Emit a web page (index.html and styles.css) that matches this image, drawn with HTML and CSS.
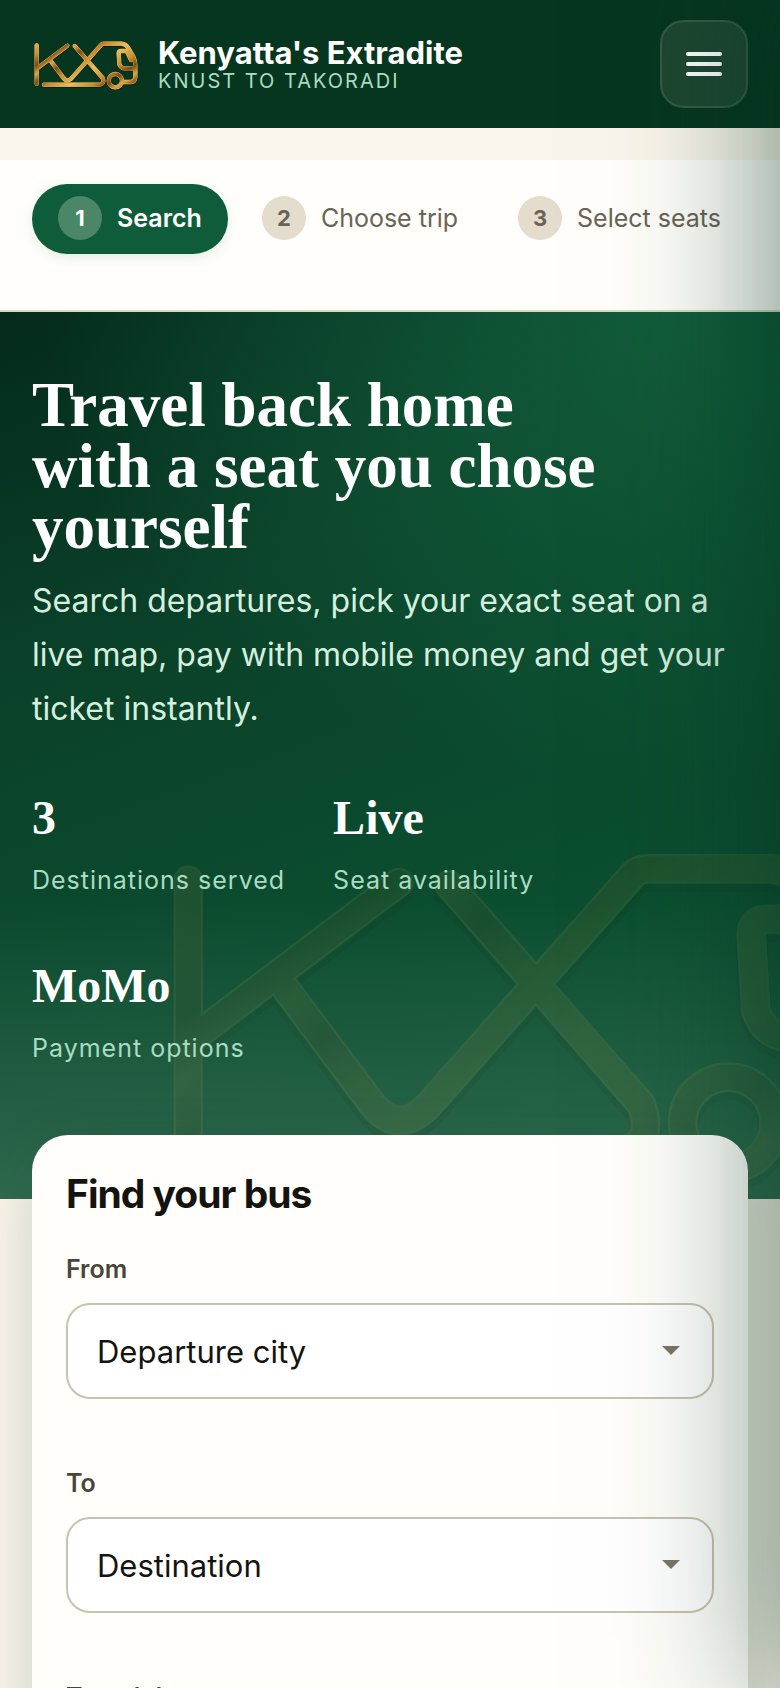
FILE: index.html
```html
<!DOCTYPE html>
<html lang="en">
<head>
<meta charset="utf-8">
<meta name="viewport" content="width=device-width, initial-scale=1">
<title>Kenyatta's Extradite</title>
<link rel="stylesheet" href="styles.css">
</head>
<body>
<svg class="defs" aria-hidden="true">
  <defs>
    <linearGradient id="gold" gradientUnits="userSpaceOnUse" x1="100" y1="120" x2="150" y2="190" spreadMethod="reflect">
      <stop offset="0" stop-color="#e9bd5c"/>
      <stop offset="0.45" stop-color="#c98d2e"/>
      <stop offset="0.75" stop-color="#7d4a12"/>
      <stop offset="1" stop-color="#dca745"/>
    </linearGradient>
    <g id="logo-lines" fill="none" stroke-linecap="round" stroke-linejoin="round">
      <path d="M110 134V249"/>
      <path d="M202 135L112 203"/>
      <path d="M153 182L189 230Q202 248 217 230L303 133Q306 129 311 129H364Q378 130 385 142L400 168Q407 184 406 205V230Q404 244 392 244H368"/>
      <path d="M224 136L308 232Q314 249 300 252H132"/>
      <path d="M384 151H363Q356 151 356 158L358 191Q362 203 375 203H402M382 155L393 178"/>
      <circle cx="346" cy="240" r="20"/>
    </g>
    <symbol id="logo" viewBox="96 112 324 156">
      <use href="#logo-lines" y="3" class="logo-shade"/>
      <use href="#logo-lines" class="logo-edge"/>
      <use href="#logo-lines" class="logo-body"/>
    </symbol>
  </defs>
</svg>

<header class="topbar">
  <a class="brand" href="#">
    <svg class="brand-logo" aria-hidden="true"><use href="#logo"/></svg>
    <span class="brand-text">
      <span class="brand-name">Kenyatta's Extradite</span>
      <span class="brand-route">KNUST TO TAKORADI</span>
    </span>
  </a>
  <button class="menu-button" type="button" aria-label="Open menu">
    <span class="bar"></span><span class="bar"></span><span class="bar"></span>
  </button>
</header>

<nav class="stepper" aria-label="Booking progress">
  <ol class="steps">
    <li class="step step-active" aria-current="step"><span class="step-number">1</span>Search</li>
    <li class="step"><span class="step-number">2</span>Choose trip</li>
    <li class="step"><span class="step-number">3</span>Select seats</li>
  </ol>
</nav>

<main>
  <section class="hero">
    <svg class="hero-mark" aria-hidden="true"><use href="#logo"/></svg>
    <div class="hero-content">
      <h1 class="hero-title">Travel back home <br>with a seat you chose yourself</h1>
      <p class="hero-lead">Search departures, pick your exact seat on a live map, pay with mobile money and get your ticket instantly.</p>
      <ul class="stats">
        <li class="stat"><strong class="stat-value">3</strong><span class="stat-label">Destinations served</span></li>
        <li class="stat"><strong class="stat-value">Live</strong><span class="stat-label">Seat availability</span></li>
        <li class="stat"><strong class="stat-value">MoMo</strong><span class="stat-label">Payment options</span></li>
      </ul>
    </div>
  </section>

  <form class="search-card">
    <h2 class="card-title">Find your bus</h2>
    <div class="field">
      <label class="field-label" for="from">From</label>
      <div class="select-wrap">
        <select class="control" id="from"><option>Departure city</option></select>
      </div>
    </div>
    <div class="field">
      <label class="field-label" for="to">To</label>
      <div class="select-wrap">
        <select class="control" id="to"><option>Destination</option></select>
      </div>
    </div>
    <div class="field">
      <label class="field-label" for="date">Travel date</label>
      <input class="control" id="date" type="text">
    </div>
  </form>
</main>

<aside class="drawer" aria-hidden="true"></aside>
</body>
</html>
```
FILE: styles.css
```css
* {
  box-sizing: border-box;
}

html {
  height: 100%;
}

body {
  margin: 0;
  height: 100%;
  overflow: hidden;
  background: #faf5ea;
  color: #15130f;
  font-family: Inter, "Liberation Sans", sans-serif;
}

.defs {
  position: absolute;
  width: 0;
  height: 0;
}

.logo-shade {
  stroke: #1d1204;
  stroke-width: 14px;
  stroke-opacity: 0.7;
}

.logo-edge {
  stroke: #f2cd7c;
  stroke-width: 13px;
}

.logo-body {
  stroke: url(#gold);
  stroke-width: 11px;
}

/* Top bar */
.topbar {
  display: flex;
  align-items: center;
  justify-content: space-between;
  height: 128px;
  padding: 0 32px;
  background: #073620;
}

.brand {
  display: flex;
  align-items: center;
  gap: 18px;
  color: #fff;
  text-decoration: none;
}

.brand-logo {
  width: 108px;
  height: 52px;
}

.brand-text {
  display: flex;
  flex-direction: column;
  padding-top: 2px;
}

.brand-name {
  font-size: 31px;
  font-weight: 700;
  line-height: 32px;
}

.brand-route {
  color: #a9dcc0;
  font-size: 20px;
  line-height: 24px;
  letter-spacing: 2px;
}

.menu-button {
  display: flex;
  flex-direction: column;
  align-items: center;
  justify-content: center;
  gap: 6px;
  width: 88px;
  height: 88px;
  padding: 0;
  border: 2px solid #365b45;
  border-radius: 24px;
  background: #1e4732;
}

.bar {
  width: 36px;
  height: 4px;
  border-radius: 2px;
  background: #fff;
}

/* Stepper */
.stepper {
  height: 152px;
  margin-top: 32px;
  padding: 24px 32px;
  border-bottom: 2px solid #dcd7cc;
  background: #fffefa;
  overflow: hidden;
}

.steps {
  display: flex;
  gap: 8px;
  margin: 0;
  padding: 0;
  list-style: none;
}

.step {
  display: flex;
  flex: none;
  align-items: center;
  gap: 15px;
  height: 70px;
  padding: 0 26px 2px;
  border-radius: 35px;
  color: #6b6355;
  font-size: 25px;
}

.step-active {
  background: #0f5c3a;
  box-shadow: 0 4px 12px #0f5c3a1a;
  color: #fff;
  font-weight: 600;
}

.step-number {
  display: grid;
  place-items: center;
  width: 44px;
  height: 44px;
  border-radius: 50%;
  background: #e4dccd;
  font-size: 22px;
  font-weight: 700;
}

.step-active .step-number {
  background: #4b8668;
}

/* Hero */
.hero {
  position: relative;
  overflow: hidden;
  padding: 63px 32px 131px;
  background:
    linear-gradient(to top, #ffffff26 0, #ffffff1a 80px, #ffffff00 300px),
    radial-gradient(ellipse 620px 480px at 85% 0, #176f46aa, #176f4600),
    linear-gradient(160deg, #042a1c 0%, #0a4029 30%, #0b4c2f 60%, #0e5534 100%);
}

.hero-mark {
  position: absolute;
  right: -118px;
  bottom: 12px;
  width: 742px;
  height: 357px;
  opacity: 0.09;
}

.hero-content {
  position: relative;
}

.hero-title {
  margin: 0;
  color: #fff;
  font-family: Georgia, "Liberation Serif", serif;
  font-size: 63px;
  font-weight: 700;
  line-height: 61px;
}

.hero-lead {
  margin: 16px 0 0;
  color: #d5efdf;
  font-size: 32px;
  line-height: 54px;
}

.stats {
  display: flex;
  flex-wrap: wrap;
  gap: 52px 48px;
  margin: 48px 0 0;
  padding: 0;
  list-style: none;
}

.stat {
  display: flex;
  flex-direction: column;
  gap: 8px;
}

.stat-value {
  color: #fff;
  font-family: Georgia, "Liberation Serif", serif;
  font-size: 48px;
  line-height: 68px;
}

.stat-label {
  color: #a9dcc0;
  font-size: 25px;
  line-height: 40px;
  letter-spacing: 1px;
}

/* Search card */
.search-card {
  position: relative;
  margin: -64px 32px 0;
  padding: 34px;
  border-radius: 36px;
  background: #fffefa;
  box-shadow: 0 24px 64px #07362033;
}

.card-title {
  margin: 0 0 30px;
  font-size: 39px;
  font-weight: 700;
  line-height: 50px;
  letter-spacing: -1px;
}

.field {
  margin-bottom: 64px;
}

.field-label {
  display: block;
  margin-bottom: 14px;
  color: #4a453b;
  font-size: 25px;
  font-weight: 600;
  line-height: 40px;
}

.select-wrap {
  position: relative;
}

.select-wrap::after {
  content: "";
  position: absolute;
  top: 43px;
  right: 34px;
  border: 9px solid transparent;
  border-top-color: #7d7565;
  border-bottom: 0;
  pointer-events: none;
}

.control {
  display: block;
  width: 100%;
  height: 96px;
  padding: 0 29px;
  border: 2px solid #c9c2b0;
  border-radius: 24px;
  appearance: none;
  background: #fff;
  color: #15130f;
  font: 400 31px Inter, "Liberation Sans", sans-serif;
}

.drawer {
  position: fixed;
  top: -80px;
  bottom: -20px;
  left: 100%;
  width: 640px;
  box-shadow: 0 0 150px #04301f99;
}
```
